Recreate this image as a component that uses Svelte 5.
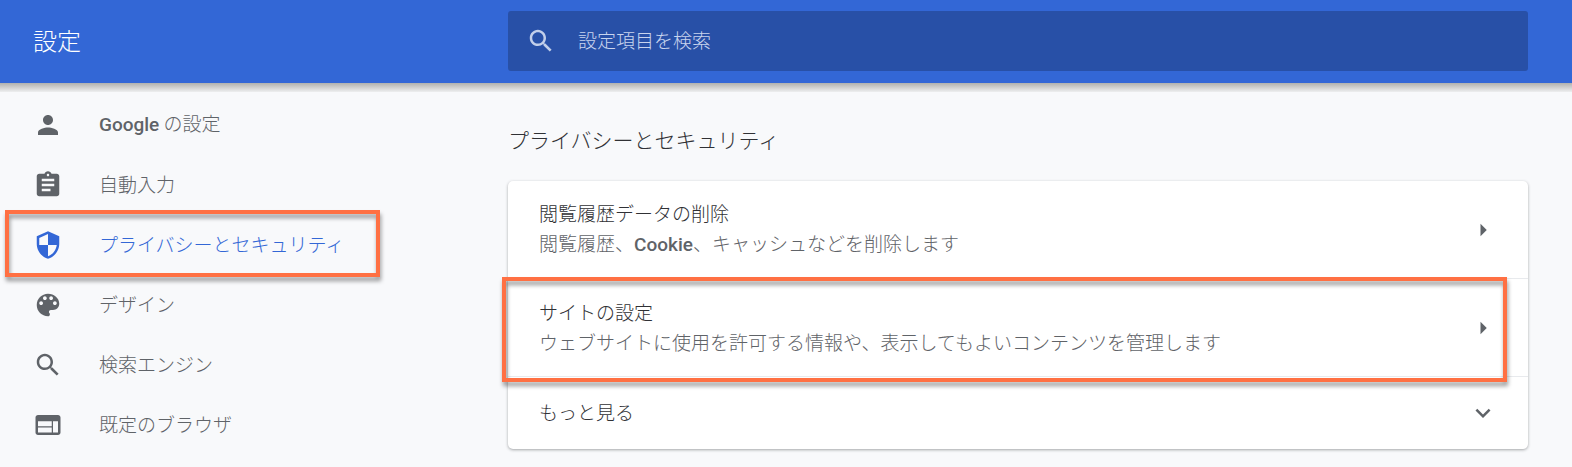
<script>
  const icons = {
    person: 'M12 12c2.21 0 4-1.79 4-4s-1.79-4-4-4-4 1.79-4 4 1.79 4 4 4zm0 2c-2.67 0-8 1.34-8 4v2h16v-2c0-2.66-5.33-4-8-4z',
    clipboard: 'M19 3h-4.18C14.4 1.84 13.3 1 12 1c-1.3 0-2.4.84-2.82 2H5c-1.1 0-2 .9-2 2v14c0 1.1.9 2 2 2h14c1.1 0 2-.9 2-2V5c0-1.1-.9-2-2-2zm-7 0c.55 0 1 .45 1 1s-.45 1-1 1-1-.45-1-1 .45-1 1-1zm2 14H7v-2h7v2zm3-4H7v-2h10v2zm0-4H7V7h10v2z',
    shield: 'M12 1L3 5v6c0 5.55 3.84 10.74 9 12 5.16-1.26 9-6.45 9-12V5l-9-4zm0 10.99h7c-.53 4.12-3.28 7.79-7 8.94V12H5V6.3l7-3.11v8.8z',
    palette: 'M12 3c-4.97 0-9 4.03-9 9s4.03 9 9 9c.83 0 1.5-.67 1.5-1.5 0-.39-.15-.74-.39-1.01-.23-.26-.38-.61-.38-.99 0-.83.67-1.5 1.5-1.5H16c2.76 0 5-2.24 5-5 0-4.42-4.03-8-9-8zm-5.5 9c-.83 0-1.5-.67-1.5-1.5S5.67 9 6.5 9 8 9.67 8 10.5 7.33 12 6.5 12zm3-4C8.67 8 8 7.33 8 6.5S8.67 5 9.5 5s1.5.67 1.5 1.5S10.33 8 9.5 8zm5 0c-.83 0-1.5-.67-1.5-1.5S13.67 5 14.5 5s1.5.67 1.5 1.5S15.33 8 14.5 8zm3 4c-.83 0-1.5-.67-1.5-1.5S16.67 9 17.5 9s1.5.67 1.5 1.5-.67 1.5-1.5 1.5z',
    search: 'M15.5 14h-.79l-.28-.27C15.41 12.59 16 11.11 16 9.5 16 5.91 13.09 3 9.5 3S3 5.91 3 9.5 5.91 16 9.5 16c1.61 0 3.09-.59 4.23-1.57l.27.28v.79l5 4.99L20.49 19l-4.99-5zm-6 0C7.01 14 5 11.99 5 9.5S7.01 5 9.5 5 14 7.01 14 9.5 11.99 14 9.5 14z',
    browser: 'M20 4H4c-1.1 0-1.99.9-1.99 2L2 18c0 1.1.9 2 2 2h16c1.1 0 2-.9 2-2V6c0-1.1-.9-2-2-2zm-5 14H4v-4h11v4zm0-5H4V9h11v4zm5 5h-4V9h4v9z',
    arrow: 'M10 7l5 5-5 5z',
    expand: 'M16.59 8.59L12 13.17 7.41 8.59 6 10l6 6 6-6z',
  };

  const menu = [
    { icon: 'person', latin: 'Google', label: ' の設定' },
    { icon: 'clipboard', label: '自動入力' },
    { icon: 'shield', label: 'プライバシーとセキュリティ', active: true },
    { icon: 'palette', label: 'デザイン' },
    { icon: 'search', label: '検索エンジン' },
    { icon: 'browser', label: '既定のブラウザ' },
  ];
</script>

{#snippet icon(name)}
  <svg class="icon" viewBox="0 0 24 24" aria-hidden="true"><path d={icons[name]} /></svg>
{/snippet}

<div class="page">
  <header>
    <h1>設定</h1>
    <label class="search">
      {@render icon('search')}
      <input type="search" placeholder="設定項目を検索" aria-label="設定項目を検索" />
    </label>
  </header>

  <div class="body">
    <nav>
      {#each menu as item}
        <a href="#{item.icon}" class:active={item.active} class:marked={item.active}>
          {@render icon(item.icon)}
          <span class="text"><span>{#if item.latin}<b>{item.latin}</b>{/if}{item.label}</span></span>
        </a>
      {/each}
    </nav>

    <main>
      <h2>プライバシーとセキュリティ</h2>
      <div class="card">
        <button class="row">
          <span class="text">
            <span>閲覧履歴データの削除</span>
            <span class="sub">閲覧履歴、<b>Cookie</b>、キャッシュなどを削除します</span>
          </span>
          {@render icon('arrow')}
        </button>
        <button class="row marked">
          <span class="text">
            <span>サイトの設定</span>
            <span class="sub">ウェブサイトに使用を許可する情報や、表示してもよいコンテンツを管理します</span>
          </span>
          {@render icon('arrow')}
        </button>
        <button class="row more">
          <span class="text">もっと見る</span>
          {@render icon('expand')}
        </button>
      </div>
    </main>
  </div>
</div>

<style>
  :global(body) {
    margin: 0;
    background: #f8f9fb;
  }

  .page {
    min-height: 100vh;
    box-sizing: border-box;
    font-family: 'Noto Sans CJK JP', sans-serif;
    font-size: 19px;
    font-weight: 300;
    line-height: 30px;
    color: #303135;
  }

  .icon {
    flex: none;
    width: 30px;
    height: 30px;
    fill: #5f6368;
  }

  b {
    font-family: Roboto, sans-serif;
    font-weight: 500;
  }

  header {
    position: relative;
    display: grid;
    grid-template-columns: 508px 1fr;
    align-items: center;
    height: 83px;
    padding: 0 44px 2px 0;
    box-sizing: border-box;
    background: #3367d6;
  }

  header::after {
    content: '';
    position: absolute;
    inset: 100% 0 auto;
    height: 9px;
    background: linear-gradient(#b1b1ae, #eeeff0);
  }

  h1 {
    margin: 0;
    padding: 0 0 2px 33px;
    font-size: 24px;
    font-weight: 300;
    color: #fff;
  }

  .search {
    display: flex;
    align-items: center;
    gap: 22px;
    height: 60px;
    padding: 0 18px;
    border-radius: 3px;
    background: #2850a7;
  }

  .search .icon {
    fill: #c2cfea;
  }

  input {
    flex: 1;
    min-width: 0;
    padding: 0 0 2px;
    border: 0;
    outline: 0;
    background: none;
    font: inherit;
    color: #fff;
  }

  input::placeholder {
    color: #c8d4ee;
    opacity: 1;
  }

  .body {
    display: grid;
    grid-template-columns: 508px 1fr;
    padding-right: 44px;
  }

  nav {
    display: flex;
    flex-direction: column;
    align-items: flex-start;
    padding: 12px 0 0 5px;
  }

  nav a {
    display: flex;
    align-items: center;
    gap: 36px;
    width: 375px;
    height: 60px;
    padding-left: 28px;
    box-sizing: border-box;
    color: #5f6368;
    text-decoration: none;
  }

  nav .active {
    color: #3367d6;
  }

  nav .active .icon {
    fill: #3367d6;
  }

  .marked {
    position: relative;
  }

  .marked::after {
    content: '';
    position: absolute;
    z-index: 1;
    border: 4px solid #ff7043;
    filter: drop-shadow(1px 4px 2px rgba(0, 0, 0, 0.4));
    pointer-events: none;
  }

  nav .marked::after {
    inset: -5px 0 -2px;
  }

  .row.marked::after {
    inset: -2px 21px -6px -6px;
  }

  h2 {
    margin: 0;
    padding: 41px 0 27px;
    font-size: 21px;
    font-weight: 300;
  }

  .card {
    border-radius: 5px;
    background: #fff;
    box-shadow: 0 1px 3px rgba(60, 64, 67, 0.45);
  }

  .row {
    display: flex;
    align-items: center;
    justify-content: space-between;
    width: 100%;
    height: 98px;
    padding: 0 30px 0 31px;
    border: 0;
    border-bottom: 1px solid #e8eaed;
    box-sizing: border-box;
    background: none;
    font: inherit;
    color: inherit;
    text-align: left;
  }

  .row.more {
    height: 72px;
    border-bottom: 0;
  }

  .text {
    display: flex;
    flex-direction: column;
    padding-bottom: 2px;
  }

  .sub {
    color: #5f6368;
  }
</style>
